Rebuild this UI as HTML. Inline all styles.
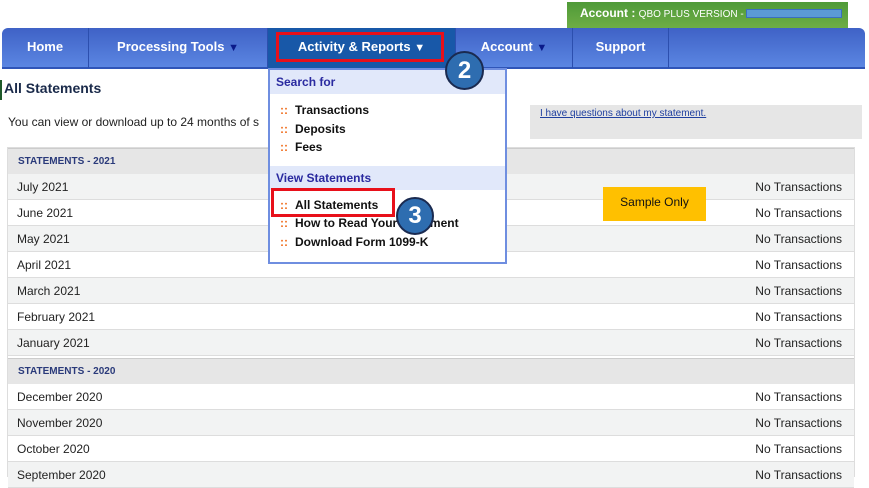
<!DOCTYPE html>
<html><head><meta charset="utf-8"><style>
*{margin:0;padding:0;box-sizing:border-box}
body{width:869px;height:472px;overflow:hidden;background:#fff;font-family:"Liberation Sans",Arial,sans-serif;position:relative}
.a{position:absolute}
.nav{left:2px;top:28px;width:863px;height:41px;background:linear-gradient(#3f62c6,#5b86e2);border-radius:6px 6px 0 0;border-bottom:2px solid #2f55b8}
.ni{position:absolute;top:28px;height:40px;color:#fff;font-weight:bold;font-size:13px;line-height:38px;text-align:center;border-right:1px solid #2c4fae}
.tri{color:#0a1a8a;font-size:11px}
.row{position:absolute;left:8px;width:846px;height:26px;font-size:12px;color:#222;line-height:26px;border-bottom:1px solid #ddd}
.row span{position:absolute;right:12px}
.row b{font-weight:normal;padding-left:9px}
.hd{position:absolute;left:8px;width:846px;height:26px;background:#e6e6e6;font-size:10px;font-weight:bold;color:#2a3a7a;line-height:26px;padding-left:10px;border-top:1px solid #ccc}
.dd{left:268px;top:68px;width:239px;height:196px;background:#fff;border:2px solid #6f8ee0}
.dd .s{background:#e1e8fa;color:#2a2aa0;font-weight:bold;font-size:12px;height:24px;line-height:24px;padding-left:6px}
.dd .i{font-size:12px;font-weight:bold;color:#111;height:18.5px;line-height:18.5px;padding-left:10px}
.dd .i i{color:#f07020;font-style:normal;margin-right:7px}
.c{border-radius:50%;background:#2e6db0;border:2px solid #1a2a50;color:#fff;font-weight:bold;text-align:center;font-size:22px;z-index:5}
</style></head><body>
<div class="a" style="left:567px;top:2px;width:281px;height:27px;background:linear-gradient(#4f9a38,#6fae46)"></div>
<div class="a" style="left:580px;top:6px;color:#fff;font-weight:bold;font-size:12px">Account : <span style="font-size:10px;font-weight:normal">QBO PLUS VERSION - </span></div>
<div class="a" style="left:746px;top:9px;width:96px;height:9px;background:#5b9ad6;border:1px solid #3a6fc0"></div>
<div class="a nav"></div>
<div class="ni" style="left:2px;width:87px">Home</div>
<div class="ni" style="left:89px;width:179px">Processing Tools <span class="tri">▼</span></div>
<div class="ni" style="left:268px;width:187px;background:#1858a8;border-right:none">Activity &amp; Reports <span style="font-size:11px">▼</span></div>
<div class="a" style="left:276px;top:32px;width:168px;height:30px;border:3px solid #e8101a"></div>
<div class="ni" style="left:455px;width:118px;border-left:1px solid #2c4fae">Account <span class="tri">▼</span></div>
<div class="ni" style="left:573px;width:96px">Support</div>
<div class="a" style="left:0;top:80px;width:2px;height:20px;background:#1e5a2a"></div>
<div class="a" style="left:4px;top:80px;font-size:14px;font-weight:bold;color:#1a2a4a">All Statements</div>
<div class="a" style="left:8px;top:115px;font-size:12px;color:#222">You can view or download up to 24 months of s</div>
<div class="a" style="left:530px;top:105px;width:332px;height:34px;background:#e6e6e6"></div>
<div class="a" style="left:540px;top:108px;font-size:10px;color:#2040a0;text-decoration:underline">I have questions about my statement.</div>
<div class="a" style="left:7px;top:147px;width:848px;height:330px;border:1px solid #ddd;border-bottom:none"></div>
<div class="hd" style="top:148px">STATEMENTS - 2021</div>
<div class="row" style="top:174px;background:#f2f3f3"><b>July 2021</b><span>No Transactions</span></div>
<div class="row" style="top:200px"><b>June 2021</b><span>No Transactions</span></div>
<div class="row" style="top:226px;background:#f2f3f3"><b>May 2021</b><span>No Transactions</span></div>
<div class="row" style="top:252px"><b>April 2021</b><span>No Transactions</span></div>
<div class="row" style="top:278px;background:#f2f3f3"><b>March 2021</b><span>No Transactions</span></div>
<div class="row" style="top:304px"><b>February 2021</b><span>No Transactions</span></div>
<div class="row" style="top:330px;background:#f2f3f3"><b>January 2021</b><span>No Transactions</span></div>
<div class="hd" style="top:358px">STATEMENTS - 2020</div>
<div class="row" style="top:384px"><b>December 2020</b><span>No Transactions</span></div>
<div class="row" style="top:410px;background:#f2f3f3"><b>November 2020</b><span>No Transactions</span></div>
<div class="row" style="top:436px"><b>October 2020</b><span>No Transactions</span></div>
<div class="row" style="top:462px;background:#f2f3f3"><b>September 2020</b><span>No Transactions</span></div>
<div class="a" style="left:603px;top:187px;width:103px;height:34px;background:#ffc000;font-size:12px;line-height:30px;text-align:center;color:#111">Sample Only</div>
<div class="a dd">
<div class="s">Search for</div>
<div style="height:7px"></div>
<div class="i"><i>::</i>Transactions</div>
<div class="i"><i>::</i>Deposits</div>
<div class="i"><i>::</i>Fees</div>
<div style="height:9px"></div>
<div class="s">View Statements</div>
<div style="height:6px"></div>
<div class="i"><i>::</i>All Statements</div>
<div class="i"><i>::</i>How to Read Your Statement</div>
<div class="i"><i>::</i>Download Form 1099-K</div>
</div>
<div class="a" style="left:271px;top:188px;width:124px;height:29px;border:3px solid #e8101a"></div>
<div class="a c" style="left:445px;top:51px;width:39px;height:39px;line-height:35px;font-size:24px">2</div>
<div class="a c" style="left:396px;top:197px;width:38px;height:38px;line-height:34px;font-size:24px">3</div>
</body></html>
